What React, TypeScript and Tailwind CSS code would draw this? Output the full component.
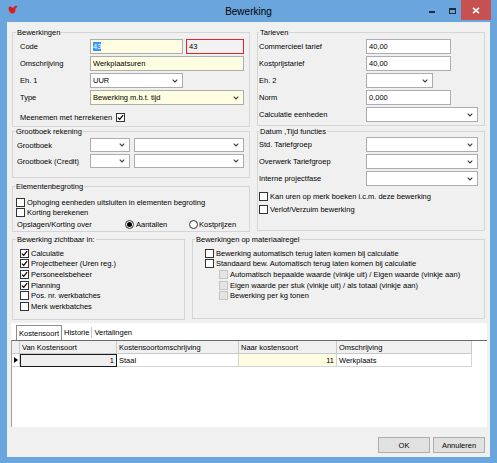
import clsx from "clsx"
import type { ReactNode } from "react"

const font = "font-['Liberation_Sans',Arial,sans-serif]"

function Chevron() {
  return (
    <svg width="6" height="4" viewBox="0 0 6 4" className="mr-[4px] shrink-0">
      <path d="M0.7 0.7 L3 3 L5.3 0.7" fill="none" stroke="#3c3c3c" strokeWidth="1.1" />
    </svg>
  )
}

function TextBox({ value, className, yellow }: { value?: ReactNode; className: string; yellow?: boolean }) {
  return (
    <div
      className={clsx(
        "flex shrink-0 items-center border border-[#abadb3] pl-[2px]",
        yellow ? "bg-[#fffde1]" : "bg-white",
        className,
      )}
    >
      {value}
    </div>
  )
}

function Combo({ value, className, yellow }: { value?: string; className: string; yellow?: boolean }) {
  return (
    <div
      className={clsx(
        "flex shrink-0 items-center justify-between border border-[#acacac] pl-[2px]",
        yellow ? "bg-[#fffde1]" : "bg-white",
        className,
      )}
    >
      <span>{value}</span>
      <Chevron />
    </div>
  )
}

function Check({ checked, disabled }: { checked?: boolean; disabled?: boolean }) {
  return (
    <span
      className={clsx(
        "flex h-[9px] w-[9px] shrink-0 items-center justify-center border",
        disabled ? "border-[#c4c4c4] bg-[#e4e4e4]" : "border-[#333] bg-white",
      )}
    >
      {checked && (
        <svg width="7" height="7" viewBox="0 0 7 7">
          <path d="M0.9 3.6 L2.7 5.4 L6.1 1.2" fill="none" stroke="#000" strokeWidth="1.2" />
        </svg>
      )}
    </span>
  )
}

function Radio({ checked }: { checked?: boolean }) {
  return (
    <span className="flex h-[9px] w-[9px] shrink-0 items-center justify-center rounded-full border border-[#333] bg-white">
      {checked && <span className="h-[5px] w-[5px] rounded-full bg-black" />}
    </span>
  )
}

function CheckRow({
  label,
  checked,
  disabled,
  className,
}: {
  label: string
  checked?: boolean
  disabled?: boolean
  className?: string
}) {
  return (
    <div className={clsx("flex items-center gap-[2px] whitespace-nowrap", className)}>
      <Check checked={checked} disabled={disabled} />
      <span>{label}</span>
    </div>
  )
}

function GroupBox({
  title,
  className,
  legendClass,
  children,
}: {
  title: string
  className: string
  legendClass?: string
  children: ReactNode
}) {
  return (
    <fieldset className={clsx("shrink-0 border border-[#d5d5d5]", className)}>
      <legend className={clsx("px-[1px] leading-[9px]", legendClass ?? "ml-[3px]")}>{title}</legend>
      {children}
    </fieldset>
  )
}

function Field({ label, labelClass, children }: { label: string; labelClass: string; children: ReactNode }) {
  return (
    <div className="flex h-[15px] items-center">
      <span className={clsx("shrink-0 whitespace-nowrap", labelClass)}>{label}</span>
      {children}
    </div>
  )
}

function Logo() {
  return (
    <svg width="10" height="9" viewBox="0 0 10 9">
      <path
        d="M0.6 3.4 C0.6 1.6 2.2 1.2 3.4 2 L4.8 3 L7.9 0.4 L9.6 1.6 L7.2 4 C8 5.6 6.9 8.4 4.8 8.5 C2.6 8.5 0.6 6.2 0.6 3.4 Z"
        fill="#e01b1b"
      />
    </svg>
  )
}

function TitleBar() {
  return (
    <div className="grid h-[22px] shrink-0 grid-cols-[1fr_auto_1fr]">
      <div className="flex items-start pl-[8px] pt-[5px]">
        <Logo />
      </div>
      <div className="flex items-center text-[10px] text-black">Bewerking</div>
      <div className="flex items-start justify-end">
        <div className="mt-[11px] h-[2px] w-[6px] bg-[#1f2c3a]" />
        <div className="ml-[14px] mt-[8px] h-[6px] w-[7px] border border-t-2 border-[#1f2c3a]" />
        <div className="ml-[5px] mr-[6px] flex h-[20px] w-[30px] items-center justify-center bg-[#c75050]">
          <svg width="8" height="7" viewBox="0 0 8 7">
            <path d="M1 0.8 L7 6.2 M7 0.8 L1 6.2" stroke="#fff" strokeWidth="1.6" />
          </svg>
        </div>
      </div>
    </div>
  )
}

const cols = [
  { w: "w-[97px]", title: "Van Kostensoort" },
  { w: "w-[122px]", title: "Kostensoortomschrijving" },
  { w: "w-[98px]", title: "Naar kostensoort" },
  { w: "w-[135px]", title: "Omschrijving" },
]

function Grid() {
  return (
    <div className="flex flex-col">
      <div className="flex h-[13px]">
        <div className="w-[8px] shrink-0 border-r border-b border-[#c9c9c9] bg-[#f0f0f0]" />
        {cols.map((c) => (
          <div
            key={c.title}
            className={clsx(
              "flex shrink-0 items-center border-r border-b border-[#c9c9c9] bg-[#f0f0f0] pl-[2px]",
              c.w,
            )}
          >
            {c.title}
          </div>
        ))}
      </div>
      <div className="flex h-[13px]">
        <div className="flex w-[8px] shrink-0 items-center border-r border-b border-[#d4d4d4] pl-[2px]">
          <svg width="4" height="6" viewBox="0 0 4 6">
            <path d="M0 0 L4 3 L0 6 Z" fill="#000" />
          </svg>
        </div>
        <div className="flex w-[97px] shrink-0 items-center justify-end border border-[#1a1a1a] bg-[#efefef] pr-[2px]">
          1
        </div>
        <div className="flex w-[122px] shrink-0 items-center border-r border-b border-[#d4d4d4] pl-[2px]">Staal</div>
        <div className="flex w-[98px] shrink-0 items-center justify-end border-r border-b border-[#d4d4d4] bg-[#fffde1] pr-[2px]">
          11
        </div>
        <div className="flex w-[135px] shrink-0 items-center border-r border-b border-[#d4d4d4] pl-[2px]">
          Werkplaats
        </div>
      </div>
    </div>
  )
}

export default function App() {
  return (
    <div className={clsx("flex h-[463px] w-[497px] flex-col bg-[#6aa5de] text-[7.5px] leading-[9px] text-black", font)}>
      <TitleBar />
      <div className="mx-[7px] mb-[6px] flex flex-1 flex-col bg-[#f0f0f0] pt-[6px]">
        {/* top */}
        <div className="flex gap-[7px] pl-[5px]">
          <div className="flex w-[238px] flex-col">
            <GroupBox title="Bewerkingen" className="h-[99px] w-[238px]">
              <div className="flex flex-col gap-[2px] pt-[2px] pr-[5px] pl-[7px]">
                <Field label="Code" labelClass="w-[70px]">
                  <TextBox
                    yellow
                    className="h-[15px] w-[93px]"
                    value={<span className="bg-[#3399ff] text-white">43</span>}
                  />
                  <div className="ml-[3px] flex h-[15px] w-[58px] items-center border-[1.5px] border-[#e3242b] bg-[#f2f2f2] pl-[2px]">
                    43
                  </div>
                </Field>
                <Field label="Omschrijving" labelClass="w-[70px]">
                  <TextBox yellow className="h-[15px] w-[154px]" value="Werkplaatsuren" />
                </Field>
                <Field label="Eh. 1" labelClass="w-[70px]">
                  <Combo className="h-[15px] w-[93px]" value="UUR" />
                </Field>
                <Field label="Type" labelClass="w-[70px]">
                  <Combo yellow className="h-[15px] w-[154px]" value="Bewerking m.b.t. tijd" />
                </Field>
                <div className="mt-[5px] flex h-[11px] items-center gap-[4px]">
                  <span>Meenemen met herrekenen</span>
                  <Check checked />
                </div>
              </div>
            </GroupBox>
            <GroupBox title="Grootboek rekening" className="h-[51px] w-[238px]" legendClass="ml-[2px]">
              <div className="flex flex-col gap-[2px] pt-[2px] pr-[5px] pl-[4px]">
                <div className="flex h-[14px] items-center">
                  <span className="w-[73px] shrink-0">Grootboek</span>
                  <Combo className="h-[14px] w-[40px]" />
                  <Combo className="ml-[4px] h-[14px] w-[110px]" />
                </div>
                <div className="flex h-[14px] items-center">
                  <span className="w-[73px] shrink-0">Grootboek (Credit)</span>
                  <Combo className="h-[14px] w-[40px]" />
                  <Combo className="ml-[4px] h-[14px] w-[110px]" />
                </div>
              </div>
            </GroupBox>
            <GroupBox title="Elementenbegroting" className="mt-[4px] h-[50px] w-[238px]" legendClass="ml-[2px]">
              <div className="flex flex-col pt-[6px] pl-[3px]">
                <CheckRow className="h-[10px]" label="Ophoging eenheden uitsluiten in elementen begroting" />
                <CheckRow className="h-[10px]" label="Korting berekenen" />
                <div className="mt-[2px] ml-[1px] flex h-[10px] items-center">
                  <span className="w-[108px] shrink-0">Opslagen/Korting over</span>
                  <div className="flex w-[64px] shrink-0 items-center gap-[2px]">
                    <Radio checked />
                    <span>Aantallen</span>
                  </div>
                  <div className="flex items-center gap-[1px]">
                    <Radio />
                    <span>Kostprijzen</span>
                  </div>
                </div>
              </div>
            </GroupBox>
          </div>
          <div className="flex w-[228px] flex-col">
            <GroupBox title="Tarieven" className="h-[98px] w-[228px]" legendClass="ml-[1px]">
              <div className="flex flex-col gap-[2px] pt-[2px] pr-[4px] pl-[1px]">
                <Field label="Commercieel tarief" labelClass="w-[107px]">
                  <TextBox className="h-[15px] w-[85px]" value="40,00" />
                </Field>
                <Field label="Kostprijstarief" labelClass="w-[107px]">
                  <TextBox className="h-[15px] w-[85px]" value="40,00" />
                </Field>
                <Field label="Eh. 2" labelClass="w-[107px]">
                  <Combo className="h-[15px] w-[67px]" />
                </Field>
                <Field label="Norm" labelClass="w-[107px]">
                  <TextBox className="h-[15px] w-[85px]" value="0,000" />
                </Field>
                <Field label="Calculatie eenheden" labelClass="w-[107px]">
                  <Combo className="h-[15px] w-[112px]" />
                </Field>
              </div>
            </GroupBox>
            <GroupBox title="Datum ,Tijd functies" className="mt-[1px] h-[104px] w-[228px]" legendClass="ml-[1px]">
              <div className="flex flex-col pt-[1px] pr-[4px] pl-[1px]">
                <div className="flex flex-col gap-[2px]">
                  <Field label="Std. Tariefgroep" labelClass="w-[107px]">
                    <Combo className="h-[15px] w-[112px]" />
                  </Field>
                  <Field label="Overwerk Tariefgroep" labelClass="w-[107px]">
                    <Combo className="h-[15px] w-[112px]" />
                  </Field>
                  <Field label="Interne projectfase" labelClass="w-[107px]">
                    <Combo className="h-[15px] w-[112px]" />
                  </Field>
                </div>
                <CheckRow className="mt-[5px] h-[10px]" label="Kan uren op merk boeken i.c.m. deze bewerking" />
                <CheckRow className="mt-[3px] h-[10px]" label="Verlof/Verzuim bewerking" />
              </div>
            </GroupBox>
          </div>
        </div>

        {/* bottom groups */}
        <div className="mt-[3px] flex items-start gap-[7px] pl-[5px]">
          <GroupBox title="Bewerking zichtbaar in:" className="h-[85px] w-[173px]">
            <div className="flex flex-col pt-[4px] pl-[7px]">
              <CheckRow className="h-[10.6px]" label="Calculatie" checked />
              <CheckRow className="h-[10.6px]" label="Projectbeheer (Uren reg.)" checked />
              <CheckRow className="h-[10.6px]" label="Personeelsbeheer" checked />
              <CheckRow className="h-[10.6px]" label="Planning" checked />
              <CheckRow className="h-[10.6px]" label="Pos. nr. werkbatches" />
              <CheckRow className="h-[10.6px]" label="Merk werkbatches" />
            </div>
          </GroupBox>
          <GroupBox title="Bewerkingen op materiaalregel" className="h-[84px] w-[293px]" legendClass="ml-[2px]">
            <div className="flex flex-col pt-[4px] pl-[12px]">
              <CheckRow className="h-[10.6px]" label="Bewerking automatisch terug laten komen bij calculatie" />
              <CheckRow className="h-[10.6px]" label="Standaard bew. Automatisch terug laten komen bij calculatie" />
              <CheckRow
                className="ml-[14px] h-[10.6px]"
                disabled
                label="Automatisch bepaalde waarde (vinkje uit) / Eigen waarde (vinkje aan)"
              />
              <CheckRow
                className="ml-[14px] h-[10.6px]"
                disabled
                label="Eigen waarde per stuk (vinkje uit) / als totaal (vinkje aan)"
              />
              <CheckRow className="ml-[14px] h-[10.6px]" disabled label="Bewerking per kg tonen" />
            </div>
          </GroupBox>
        </div>

        {/* tabs */}
        <div className="mt-[3px] mr-[3px] ml-[4px] flex h-[104px] flex-col bg-white">
          <div className="flex h-[17px] items-end pl-[5px]">
            <div className="flex h-[15px] items-center border border-b-0 border-[#8d8d8d] px-[2px]">Kostensoort</div>
            <div className="flex h-[15px] items-center px-[2px]">Historie</div>
            <div className="mb-[2px] h-[11px] w-px bg-[#c8c8c8]" />
            <div className="flex h-[15px] items-center px-[2px]">Vertalingen</div>
          </div>
          <div className="flex-1 border-t border-l border-t-[#6b6b6b] border-l-[#a0a0a0]">
            <Grid />
          </div>
        </div>

        {/* buttons */}
        <div className="mt-[10px] mr-[5px] flex justify-end gap-[3px]">
          <button className="flex h-[16px] w-[52px] items-center justify-center border border-[#adadad] bg-[#e1e1e1]">
            OK
          </button>
          <button className="flex h-[16px] w-[52px] items-center justify-center border border-[#adadad] bg-[#e1e1e1]">
            Annuleren
          </button>
        </div>
      </div>
    </div>
  )
}
